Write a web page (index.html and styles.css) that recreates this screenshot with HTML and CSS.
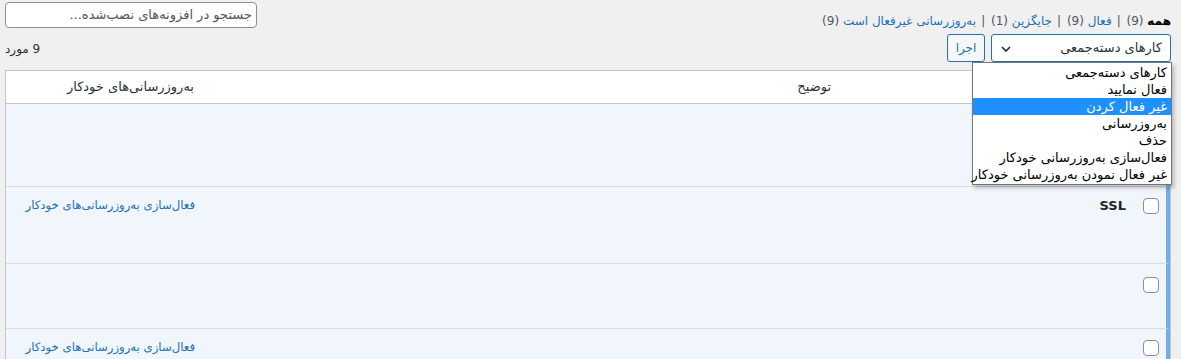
FILE: index.html
```html
<!DOCTYPE html>
<html lang="fa" dir="rtl">
<head>
<meta charset="utf-8">
<title>افزونه‌ها</title>
<link rel="stylesheet" href="styles.css">
</head>
<body>
<div class="wrap">
  <div class="top-row">
    <ul class="subsubsub">
      <li><b class="current">همه</b> <span class="count">(9)</span> <span class="sep">|</span></li>
      <li><a href="#">فعال</a> <span class="count">(9)</span> <span class="sep">|</span></li>
      <li><a href="#">جایگزین</a> <span class="count">(1)</span> <span class="sep">|</span></li>
      <li><a href="#">به‌روزرسانی غیرفعال است</a> <span class="count">(9)</span></li>
    </ul>
    <div class="search-box">جستجو در افزونه‌های نصب‌شده...</div>
  </div>
  <div class="tablenav">
    <div class="bulk">
      <div class="select">
        <span>کارهای دسته‌جمعی</span>
        <svg class="chev" width="10" height="6" viewBox="0 0 10 6"><path d="M1 1l4 4 4-4" fill="none" stroke="#1d2327" stroke-width="1.6"/></svg>
        <ul class="dropdown">
          <li>کارهای دسته‌جمعی</li>
          <li>فعال نمایید</li>
          <li class="hl">غیر فعال کردن</li>
          <li>به‌روزرسانی</li>
          <li>حذف</li>
          <li>فعال‌سازی به‌روزرسانی خودکار</li>
          <li>غیر فعال نمودن به‌روزرسانی خودکار</li>
        </ul>
      </div>
      <div class="button">اجرا</div>
    </div>
    <div class="num">9 مورد</div>
  </div>
  <table class="plugins">
    <thead>
      <tr>
        <th class="col-check"></th>
        <th class="col-name"></th>
        <th class="col-desc">توضیح</th>
        <th class="col-auto">به‌روزرسانی‌های خودکار</th>
      </tr>
    </thead>
    <tbody>
      <tr class="r1">
        <th class="col-check"></th><td></td><td></td><td></td>
      </tr>
      <tr class="r2">
        <th class="col-check"><span class="cb"></span></th>
        <td class="name"><strong>SSL</strong></td>
        <td></td>
        <td><a href="#">فعال‌سازی به‌روزرسانی‌های خودکار</a></td>
      </tr>
      <tr class="r3">
        <th class="col-check"><span class="cb"></span></th><td></td><td></td><td></td>
      </tr>
      <tr class="r4">
        <th class="col-check"><span class="cb"></span></th>
        <td></td>
        <td></td>
        <td><a href="#">فعال‌سازی به‌روزرسانی‌های خودکار</a></td>
      </tr>
    </tbody>
  </table>
</div>
</body>
</html>
```
FILE: styles.css
```css
* { box-sizing: border-box; }
html, body { margin: 0; padding: 0; }
body {
  background: #f0f0f1;
  color: #3c434a;
  font-family: "DejaVu Sans", sans-serif;
  font-size: 12px;
  direction: rtl;
  overflow: hidden;
}
.wrap { padding: 0 10px 0 5px; }
.top-row {
  display: flex;
  justify-content: space-between;
  align-items: flex-start;
  padding-top: 2px;
  height: 34px;
}
.subsubsub {
  list-style: none;
  margin: 10px 0 0;
  padding: 0;
  display: flex;
  color: #50575e;
  font-size: 12px;
  line-height: 18px;
  letter-spacing: -0.2px;
}
.subsubsub li { margin-left: 3px; }
.subsubsub .current { color: #000; }
.subsubsub a { color: #2271b1; text-decoration: none; }
.sep { margin: 0 2px; }
.search-box {
  width: 252px;
  height: 26px;
  border: 1px solid #8c8f94;
  border-radius: 4px;
  background: #fff;
  color: #50575e;
  font-size: 13px;
  line-height: 24px;
  padding: 0 4px;
}
.tablenav {
  display: flex;
  justify-content: space-between;
  align-items: flex-start;
  height: 36px;
}
.bulk { display: flex; gap: 6px; }
.select {
  position: relative;
  width: 180px;
  height: 28px;
  border: 1px solid #2271b1;
  border-radius: 3px;
  background: #fff;
  color: #2c3338;
  font-size: 13px;
  line-height: 26px;
  padding: 0 8px;
}
.chev { position: absolute; left: 9px; top: 11px; }
.dropdown {
  position: absolute;
  top: 27px;
  right: -2px;
  width: 200px;
  margin: 0;
  padding: 1px 0;
  list-style: none;
  background: #fff;
  border: 1px solid #767676;
  box-shadow: 2px 3px 4px rgba(0,0,0,0.25);
  z-index: 5;
  font-size: 13px;
  color: #000;
}
.dropdown li {
  height: 17px;
  line-height: 17px;
  padding: 0 4px;
  white-space: nowrap;
}
.dropdown li.hl { background: #1e90ff; color: #fff; }
.button {
  width: 38px;
  height: 28px;
  border: 1px solid #2271b1;
  border-radius: 3px;
  background: #f6f7f7;
  color: #2271b1;
  font-size: 12px;
  line-height: 26px;
  text-align: center;
}
.num { color: #2c3338; font-size: 12px; margin-top: 8px; }
.plugins {
  width: 1166px;
  border-collapse: separate;
  border-spacing: 0;
  border: 1px solid #c3c4c7;
  border-bottom: 0;
  background: #fff;
  table-layout: fixed;
}
.plugins th, .plugins td {
  padding: 0 8px;
  text-align: right;
  vertical-align: top;
  font-weight: normal;
}
.plugins thead th {
  height: 33px;
  line-height: 32px;
  border-bottom: 1px solid #c3c4c7;
  color: #2c3338;
  font-size: 13px;
}
.col-check { width: 35px; }
.col-name { width: 297px; }
.col-auto { width: 198px; padding-right: 10px !important; }
.col-desc { padding-right: 7px !important; }
.plugins tbody tr { background: #f0f6fc; }
.plugins tbody td, .plugins tbody th { border-top: 1px solid #dcdcde; }
.plugins tbody tr.r1 td, .plugins tbody tr.r1 th { border-top: 0; }
.plugins tbody th.col-check {
  border-right: 4px solid #72aee6;
  padding: 0;
}
.r1 td, .r1 th { height: 82px; }
.r2 td, .r2 th { height: 77px; }
.r3 td, .r3 th { height: 65px; }
.r4 td, .r4 th { height: 40px; }
.cb {
  display: block;
  width: 16px;
  height: 16px;
  border: 1px solid #8c8f94;
  border-radius: 4px;
  background: #fff;
  margin: 11px 7px 0 0;
}
.r3 .cb { margin-top: 13px; }
.r4 .cb { margin-top: 11px; }
.name strong {
  display: block;
  color: #1d2327;
  font-weight: bold;
  font-size: 13px;
  margin-top: 11px;
  padding-right: 1px;
}
.plugins a {
  display: block;
  color: #2271b1;
  text-decoration: none;
  font-size: 11.7px;
  margin-top: 11px;
  padding-right: 1px;
}
```
